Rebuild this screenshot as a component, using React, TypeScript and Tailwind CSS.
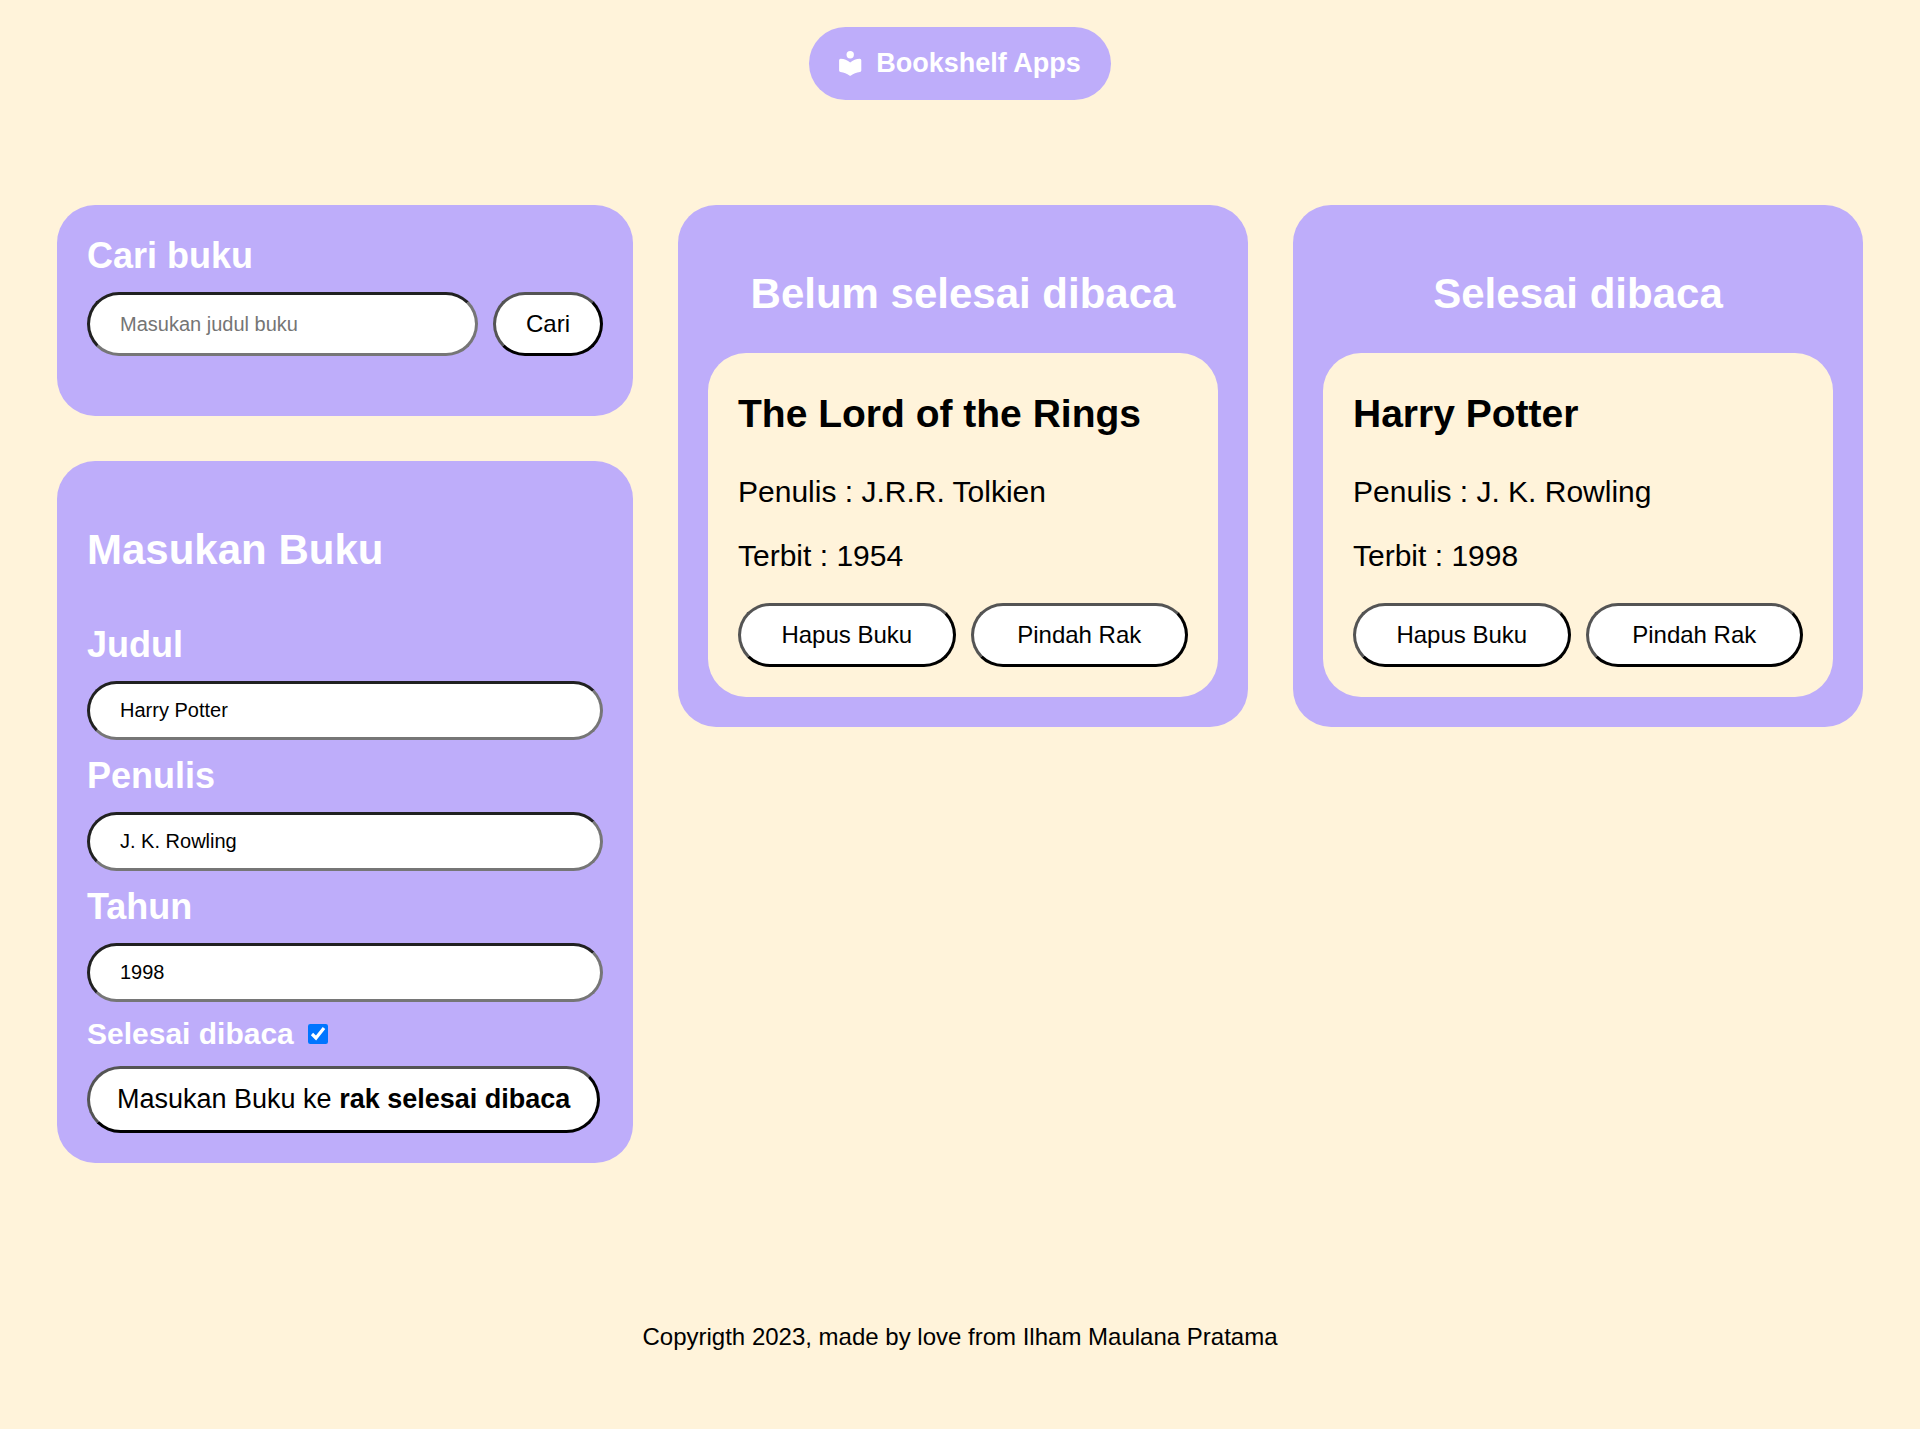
import { useState } from "react";
import type { ReactNode } from "react";

const fieldClass =
  "w-full min-w-0 rounded-full border-[3px] [border-style:inset] border-[#767676] bg-white px-[30px] text-xl leading-[23px] text-black placeholder:text-[#757575]";
const buttonClass =
  "rounded-full border-[3px] [border-style:outset] border-black bg-white text-black";

function ReaderIcon() {
  return (
    <svg viewBox="1 0 23 27" className="h-[27px] w-[23px]" fill="currentColor" aria-hidden="true">
      <circle cx="12.2" cy="4.7" r="3.7" />
      <path d="M2.6 8.7C6.2 8.9 9.5 10 12.2 12.5C14.9 10 18.2 8.9 21.8 8.7Q23.3 8.7 23.3 10.2V20.4Q23.3 21.8 21.9 22C18.4 22.5 15.4 23.8 13 25.6Q12.2 26.1 11.4 25.6C9 23.8 6 22.5 2.5 22Q1.1 21.8 1.1 20.4V10.2Q1.1 8.7 2.6 8.7Z" />
    </svg>
  );
}

function Panel({ children }: { children: ReactNode }) {
  return <section className="rounded-[38px] bg-[#BEADFA] p-[30px]">{children}</section>;
}

function Field({ id, label, type, value }: { id: string; label: string; type: string; value: string }) {
  return (
    <div className="flex flex-col gap-4">
      <label htmlFor={id} className="text-4xl leading-[41px] font-bold text-white">
        {label}
      </label>
      <input id={id} type={type} defaultValue={value} className={`${fieldClass} h-[59px]`} />
    </div>
  );
}

type Book = { title: string; author: string; year: number };

function Shelf({ heading, books }: { heading: string; books: Book[] }) {
  return (
    <Panel>
      <h2 className="py-[35px] text-center text-[42px] leading-[48px] font-bold text-white">{heading}</h2>
      {books.map((book) => (
        <article key={book.title} className="rounded-[38px] bg-[#FFF3DA] p-[30px]">
          <h3 className="mt-2 mb-[38px] text-[39px] leading-[46px] font-bold">{book.title}</h3>
          <p className="mb-[30px] text-3xl leading-[34px]">Penulis : {book.author}</p>
          <p className="mb-[30px] text-3xl leading-[34px]">Terbit : {book.year}</p>
          <div className="flex gap-[15px]">
            <button type="button" className={`${buttonClass} h-16 flex-1 text-2xl`}>
              Hapus Buku
            </button>
            <button type="button" className={`${buttonClass} h-16 flex-1 text-2xl`}>
              Pindah Rak
            </button>
          </div>
        </article>
      ))}
    </Panel>
  );
}

export default function App() {
  const [done, setDone] = useState(true);

  return (
    <div className="bg-[#FFF3DA] font-['Liberation_Sans',Arial,sans-serif] text-black">
      <header className="flex justify-center pt-[27px]">
        <h1 className="flex items-center gap-3.5 rounded-full bg-[#BEADFA] px-[30px] py-[21px] text-[27px] leading-[31px] font-bold text-white">
          <ReaderIcon />
          Bookshelf Apps
        </h1>
      </header>

      <main className="grid items-start gap-[45px] px-[57px] pt-[105px] xl:grid-cols-[576fr_570fr_570fr]">
        <div className="flex flex-col gap-[45px]">
          <Panel>
            <form className="flex flex-col gap-4 pb-[30px]" onSubmit={(e) => e.preventDefault()}>
              <label htmlFor="search" className="text-4xl leading-[41px] font-bold text-white">
                Cari buku
              </label>
              <div className="flex gap-[15px]">
                <input id="search" type="text" placeholder="Masukan judul buku" className={`${fieldClass} h-16`} />
                <button type="submit" className={`${buttonClass} h-16 px-[30px] text-2xl`}>
                  Cari
                </button>
              </div>
            </form>
          </Panel>

          <Panel>
            <h2 className="mt-[35px] mb-[50px] text-[42px] leading-[48px] font-bold text-white">Masukan Buku</h2>
            <form className="flex flex-col items-stretch gap-[15px]" onSubmit={(e) => e.preventDefault()}>
              <Field id="title" label="Judul" type="text" value="Harry Potter" />
              <Field id="author" label="Penulis" type="text" value="J. K. Rowling" />
              <Field id="year" label="Tahun" type="text" value="1998" />
              <div className="flex items-center gap-3.5">
                <label htmlFor="done" className="text-3xl leading-[34px] font-bold text-white">
                  Selesai dibaca
                </label>
                <input
                  id="done"
                  type="checkbox"
                  checked={done}
                  onChange={(e) => setDone(e.target.checked)}
                  className="size-5"
                />
              </div>
              <button
                type="submit"
                className={`${buttonClass} self-start px-[27px] py-[15px] text-[27px] leading-[31px]`}
              >
                Masukan Buku ke <b>{done ? "rak selesai dibaca" : "rak belum selesai dibaca"}</b>
              </button>
            </form>
          </Panel>
        </div>

        <Shelf heading="Belum selesai dibaca" books={[{ title: "The Lord of the Rings", author: "J.R.R. Tolkien", year: 1954 }]} />
        <Shelf heading="Selesai dibaca" books={[{ title: "Harry Potter", author: "J. K. Rowling", year: 1998 }]} />
      </main>

      <footer className="pt-40 pb-[79px] text-center text-2xl leading-[27px]">
        Copyrigth 2023, made by love from Ilham Maulana Pratama
      </footer>
    </div>
  );
}
